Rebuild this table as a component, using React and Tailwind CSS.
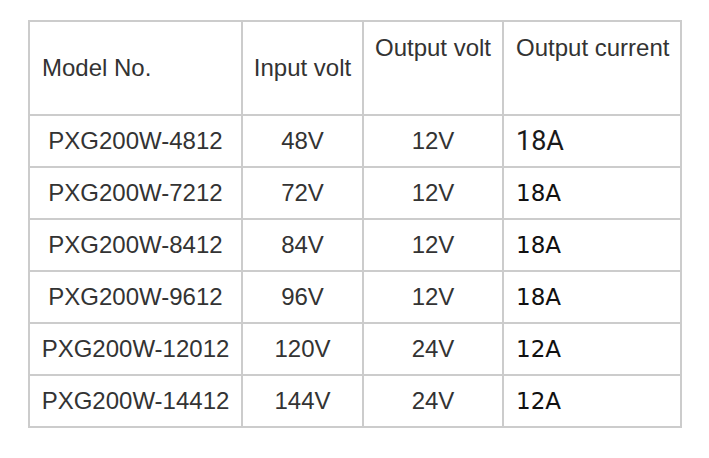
const rows = [
  ["PXG200W-4812", "48V", "12V", "18A"],
  ["PXG200W-7212", "72V", "12V", "18A"],
  ["PXG200W-8412", "84V", "12V", "18A"],
  ["PXG200W-9612", "96V", "12V", "18A"],
  ["PXG200W-12012", "120V", "24V", "12A"],
  ["PXG200W-14412", "144V", "24V", "12A"],
];

export default function App() {
  return (
    <div className="w-[709px] h-[458px] bg-white pt-5 pl-7 font-['Liberation_Sans',Arial,sans-serif] text-[24px] text-[#333]">
      <table className="table-fixed border-collapse w-[652px]">
        <colgroup>
          <col className="w-[213px]" />
          <col className="w-[121px]" />
          <col className="w-[140px]" />
          <col className="w-[178px]" />
        </colgroup>
        <thead>
          <tr className="h-[94px]">
            <th className="border-2 border-[#cccccc] px-3 font-normal text-left align-middle">Model No.</th>
            <th className="border-2 border-[#cccccc] px-1 font-normal text-center align-middle">Input volt</th>
            <th className="border-2 border-[#cccccc] px-1 pt-3 font-normal text-center align-top leading-7 whitespace-nowrap">Output volt</th>
            <th className="border-2 border-[#cccccc] pl-3 pr-0 pt-3 font-normal text-left align-top leading-7 whitespace-nowrap">Output current</th>
          </tr>
        </thead>
        <tbody>
          {rows.map((r, i) => (
            <tr key={r[0]} className="h-[52px]">
              <td className="border-2 border-[#cccccc] px-1 text-center whitespace-nowrap">{r[0]}</td>
              <td className="border-2 border-[#cccccc] px-1 text-center">{r[1]}</td>
              <td className="border-2 border-[#cccccc] px-1 text-center">{r[2]}</td>
              <td
                className={
                  i === 0
                    ? "border-2 border-[#cccccc] px-3 text-left text-[27px] text-[#1a1a1a] font-['Roboto',sans-serif]"
                    : "border-2 border-[#cccccc] px-3 text-left text-[23px] text-[#111] font-['DejaVu_Sans',Verdana,sans-serif]"
                }
              >
                {r[3]}
              </td>
            </tr>
          ))}
        </tbody>
      </table>
    </div>
  );
}
